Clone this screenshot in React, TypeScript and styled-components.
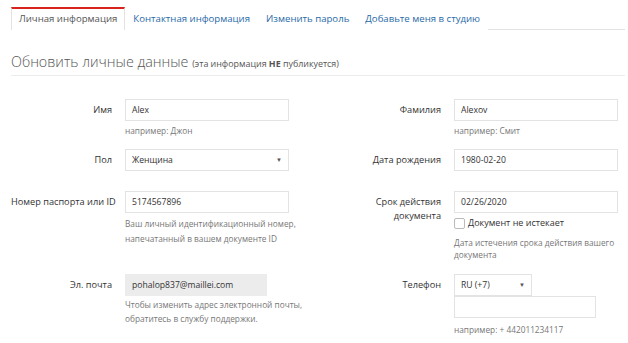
import * as React from 'react';
import styled, { createGlobalStyle } from 'styled-components';

const GlobalStyle = createGlobalStyle`
    body {
        margin: 0;
        background: #fff;
        font-family: "Open Sans", "Liberation Sans", sans-serif;
        color: #333;
    }
`;

const PageStyled = styled.div`
    width: 628px;
    height: 343px;
    overflow: hidden;
    padding: 7px 3px 0 11px;
    box-sizing: border-box;
`;

const TabsStyled = styled.div`
    display: flex;
    border-bottom: 1px solid #e3e3e3;
    height: 22px;
`;

const TabStyled = styled.div<{ $active?: boolean }>`
    padding: 0 7px;
    height: 23px;
    line-height: 20px;
    font-size: 9.6px;
    box-sizing: border-box;
    white-space: nowrap;
    color: ${p => (p.$active ? '#555' : '#2a6aa8')};
    background: #fff;
    border-top: 2px solid ${p => (p.$active ? '#d8231c' : 'transparent')};
    border-left: 1px solid ${p => (p.$active ? '#e3e3e3' : 'transparent')};
    border-right: 1px solid ${p => (p.$active ? '#e3e3e3' : 'transparent')};
    margin-bottom: -1px;
`;

const HeadingStyled = styled.h2`
    margin: 22px 0 0;
    padding-bottom: 1px;
    border-bottom: 1px solid #ececec;
    font-size: 14.3px;
    font-weight: 300;
    color: #555;
    line-height: 20px;
    white-space: nowrap;

    small {
        font-size: 8.9px;
        font-weight: 400;
        color: #555;
    }

    b {
        font-weight: 700;
    }
`;

const FormStyled = styled.div`
    display: flex;
    flex-direction: column;
    padding-top: 23px;
`;

const RowStyled = styled.div<{ $mb: number }>`
    display: grid;
    grid-template-columns: 101px 192px 111px 1fr;
    column-gap: 13px;
    margin-bottom: ${p => p.$mb}px;
`;

const LabelStyled = styled.div`
    text-align: right;
    font-size: 9.2px;
    line-height: 14px;
    padding-top: 4px;
    color: #333;
    white-space: nowrap;
`;

const FieldStyled = styled.div`
    display: flex;
    flex-direction: column;
    align-items: flex-start;
`;

const InputStyled = styled.div<{ $w?: number; $disabled?: boolean }>`
    width: ${p => p.$w ?? 164}px;
    height: 22px;
    box-sizing: border-box;
    border: 1px solid ${p => (p.$disabled ? '#ececec' : '#e3e3e3')};
    background: ${p => (p.$disabled ? '#ececec' : '#fff')};
    padding: 0 6px;
    font-size: 8.6px;
    line-height: 20px;
    color: #333;
    display: flex;
    align-items: center;
    justify-content: space-between;
    white-space: nowrap;
`;

const CaretStyled = styled.span`
    font-size: 6px;
    color: #555;
`;

const HelpStyled = styled.div<{ $mt: number; $lh: number }>`
    margin-top: ${p => p.$mt}px;
    font-size: 8.3px;
    line-height: ${p => p.$lh}px;
    color: #777;
    white-space: nowrap;
`;

const CheckRowStyled = styled.label`
    margin-top: 3px;
    display: flex;
    align-items: center;
    gap: 3px;
    font-size: 9px;
    line-height: 14px;
    color: #333;
    white-space: nowrap;
`;

const CheckboxStyled = styled.span`
    width: 11px;
    height: 11px;
    border: 1px solid #bbb;
    border-radius: 2px;
    box-sizing: border-box;
    background: #fff;
`;

export default function App() {
    return (
        <PageStyled>
            <GlobalStyle />
            <TabsStyled>
                <TabStyled $active>Личная информация</TabStyled>
                <TabStyled>Контактная информация</TabStyled>
                <TabStyled>Изменить пароль</TabStyled>
                <TabStyled>Добавьте меня в студию</TabStyled>
            </TabsStyled>
            <HeadingStyled>
                Обновить личные данные <small>(эта информация <b>НЕ</b> публикуется)</small>
            </HeadingStyled>
            <FormStyled>
                <RowStyled $mb={10}>
                    <LabelStyled>Имя</LabelStyled>
                    <FieldStyled>
                        <InputStyled>Alex</InputStyled>
                        <HelpStyled $mt={2} $lh={16}>например: Джон</HelpStyled>
                    </FieldStyled>
                    <LabelStyled>Фамилия</LabelStyled>
                    <FieldStyled>
                        <InputStyled>Alexov</InputStyled>
                        <HelpStyled $mt={2} $lh={16}>например: Смит</HelpStyled>
                    </FieldStyled>
                </RowStyled>
                <RowStyled $mb={20}>
                    <LabelStyled>Пол</LabelStyled>
                    <FieldStyled>
                        <InputStyled>
                            Женщина <CaretStyled>▼</CaretStyled>
                        </InputStyled>
                    </FieldStyled>
                    <LabelStyled>Дата рождения</LabelStyled>
                    <FieldStyled>
                        <InputStyled>1980-02-20</InputStyled>
                    </FieldStyled>
                </RowStyled>
                <RowStyled $mb={13}>
                    <LabelStyled>Номер паспорта или ID</LabelStyled>
                    <FieldStyled>
                        <InputStyled>5174567896</InputStyled>
                        <HelpStyled $mt={3} $lh={15}>
                            Ваш личный идентификационный номер,
                            <br />
                            напечатанный в вашем документе ID
                        </HelpStyled>
                    </FieldStyled>
                    <LabelStyled>
                        Срок действия
                        <br />
                        документа
                    </LabelStyled>
                    <FieldStyled>
                        <InputStyled>02/26/2020</InputStyled>
                        <CheckRowStyled>
                            <CheckboxStyled />
                            Документ не истекает
                        </CheckRowStyled>
                        <HelpStyled $mt={7} $lh={12}>
                            Дата истечения срока действия вашего
                            <br />
                            документа
                        </HelpStyled>
                    </FieldStyled>
                </RowStyled>
                <RowStyled $mb={0}>
                    <LabelStyled>Эл. почта</LabelStyled>
                    <FieldStyled>
                        <InputStyled $w={142} $disabled>pohalop837@maillei.com</InputStyled>
                        <HelpStyled $mt={2} $lh={14}>
                            Чтобы изменить адрес электронной почты,
                            <br />
                            обратитесь в службу поддержки.
                        </HelpStyled>
                    </FieldStyled>
                    <LabelStyled>Телефон</LabelStyled>
                    <FieldStyled>
                        <InputStyled $w={78}>
                            RU (+7) <CaretStyled>▼</CaretStyled>
                        </InputStyled>
                        <InputStyled $w={142} />
                        <HelpStyled $mt={4} $lh={16}>например: + 442011234117</HelpStyled>
                    </FieldStyled>
                </RowStyled>
            </FormStyled>
        </PageStyled>
    );
}
